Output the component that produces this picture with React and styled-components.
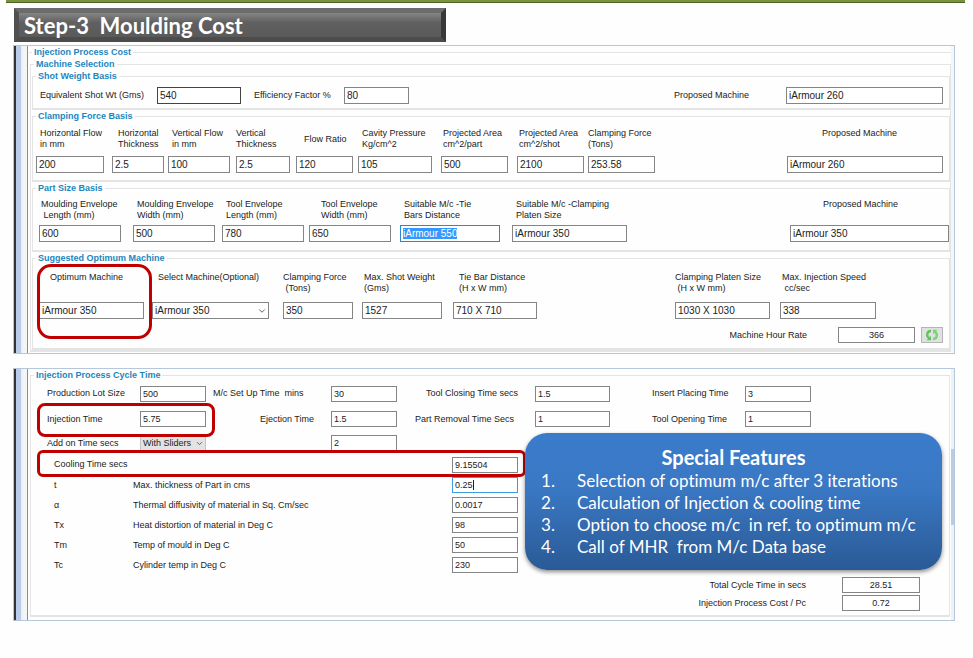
import React, {useEffect, useRef} from 'react';
import styled, {createGlobalStyle} from 'styled-components';
import {ChevronDown} from 'lucide-react';

const GlobalStyle = createGlobalStyle`
    * { box-sizing: border-box; }
    body {
        margin: 0;
        background: #fefefe;
        color: #222;
        font-family: "Liberation Sans", Arial, sans-serif;
        font-size: 9px;
        line-height: 11px;
    }
`

const Page = styled.main`
    padding: 0 18px 36px 13px;
`

const Top_Rule = styled.div`
    height: 3px;
    margin: 0 -10px 5px -7px;
    background: #77933c;
    border-bottom: 1px solid #4f6228;
`

const Title = styled.h1`
    width: 432px;
    height: 34px;
    margin: 0 0 3px 1px;
    padding-left: 5px;
    border: 5px solid;
    border-color: #6c6c6c #383838 #4c4c4c #505050;
    background: linear-gradient(#858585, #606060 40%, #5a5a5a);
    color: #fff;
    font-family: Lato, sans-serif;
    font-size: 22px;
    font-weight: 700;
    line-height: 26px;
    white-space: pre;
`

const Panel = styled.section`
    position: relative;
    display: flex;
    margin-bottom: 14px;
    border: 1px solid #b4c7dc;
    background: #fefefe;
`

const Window_Edge = styled.div`
    flex: 0 0 14px;
    border-right: 1px solid #8c8c8c;
    background: linear-gradient(to right, #333 2px, #b9cdea 2px, #b9cdea 7px, #e9eef6 7px, #f5f5f5 10px);
`

const Scroll_Edge = styled.div`
    flex: 0 0 3px;
    background: ${props => props.$thumb
        ? 'linear-gradient(#f1f1f1 80px, #bccbe0 80px, #bccbe0 156px, #f1f1f1 156px)'
        : '#f6f6f8'};
`

const Panel_Body = styled.div`
    flex: 1;
    min-width: 0;
    padding: 0 ${props => props.$side}px ${props => props.$bottom}px;
`

const Group = styled.fieldset`
    min-width: 0;
    margin: 0 0 0 1px;
    padding: 0;
    border: 1px solid #e4e4e4;
    border-width: ${props => props.$open ? '1px 0 0' : '1px 1px 2px'};
`

const Legend = styled.legend`
    height: 12px;
    margin-left: 3px;
    padding: 0 2px;
    color: #1c86c0;
    font-weight: 700;
    line-height: 12px;
`

const Row = styled.div`
    display: grid;
    grid-template-columns: ${props => props.$columns};
    align-items: ${props => props.$align || 'start'};
    padding: ${props => props.$pad};
`

const Label = styled.label`
    display: block;
    padding-left: ${props => props.$indent || 0}px;
    white-space: pre;
`

const Field_Label = styled(Label)`
    height: 22px;
    margin-bottom: ${props => props.$gap}px;
    line-height: ${props => props.$middle ? 22 : 11}px;
`

const Input = styled.input`
    display: block;
    width: ${props => props.$width ? props.$width + 'px' : '100%'};
    height: ${props => props.$small ? 16 : 17}px;
    padding: 0 2px;
    border: 1px solid ${props => props.$color || '#858585'};
    border-radius: 0;
    outline: none;
    background: #fff;
    color: #222;
    font-family: inherit;
    font-size: ${props => props.$small ? 9 : 10}px;
    text-align: ${props => props.$center ? 'center' : 'left'};

    &::selection {
        background: #3399ff;
        color: #fff;
    }
`

const Select_Box = styled.div`
    position: relative;
    width: ${props => props.$width}px;

    svg {
        position: absolute;
        right: 2px;
        top: 4px;
        pointer-events: none;
    }
`

const Select = styled.select`
    display: block;
    width: 100%;
    height: ${props => props.$small ? 16 : 17}px;
    padding: 0 2px;
    border: 1px solid ${props => props.$small ? '#c4c4c4' : '#858585'};
    border-radius: 0;
    appearance: none;
    background: ${props => props.$small ? '#e3e3e3' : '#fff'};
    color: #222;
    font-family: inherit;
    font-size: ${props => props.$small ? 9 : 10}px;
`

/* red marker drawn over the fields it surrounds */
const Marker = styled.span`
    position: absolute;
    top: ${props => props.$top}px;
    left: ${props => props.$left}px;
    width: ${props => props.$width}px;
    height: ${props => props.$height}px;
    border: 3px solid #c00000;
    border-radius: ${props => props.$radius}px;
    pointer-events: none;
    z-index: 1;
`

const Marked = styled.div`
    position: relative;
`

const Rate_Row = styled.div`
    display: flex;
    align-items: center;
    justify-content: flex-end;
    padding: 8px 6px 5px 0;
`

const Rate_Label = styled.label`
    margin-right: 31px;
`

const Refresh_Button = styled.button`
    display: flex;
    align-items: center;
    justify-content: center;
    width: 22px;
    height: 16px;
    margin-left: 6px;
    padding: 0;
    border: 1px solid #b5b5b5;
    background: #e1e1e1;
`

const Cycle_Grid = styled.div`
    display: grid;
    grid-template-columns: 93px 73px 118px 84px 120px 117px 93px 66px;
    grid-template-rows: 25px 26px 22px;
    align-items: center;
    padding: 0 0 0 16px;
`

const Cooling_Row = styled.div`
    position: relative;
    display: grid;
    grid-template-columns: 79px 319px 66px;
    align-items: center;
    width: 464px;
    height: ${props => props.$tall ? 21 : 20}px;
    margin-left: 23px;
`

const Wide_Label = styled(Label)`
    grid-column: span 2;
`

/* text cursor of the value being typed */
const Typing = styled.div`
    position: relative;

    &::after {
        content: '';
        position: absolute;
        left: 21px;
        top: 3px;
        width: 1px;
        height: 10px;
        background: #222;
    }
`

const Totals = styled.div`
    display: grid;
    grid-template-columns: auto 78px;
    grid-auto-rows: 18px;
    align-items: center;
    justify-content: end;
    column-gap: 36px;
    padding: 1px 29px 3px 0;
    text-align: right;
`

const Callout = styled.aside`
    position: absolute;
    top: 64px;
    right: 12px;
    width: 417px;
    padding: 12px 16px;
    border-radius: 22px;
    background: linear-gradient(#3a7ccb, #3a78c4 40%, #2a5a96);
    box-shadow: 0 2px 4px rgba(0, 0, 0, 0.45);
    color: #fff;
    font-family: Lato, sans-serif;
    font-size: 17px;
    font-variant-ligatures: none;
    line-height: 22px;
    z-index: 2;
`

const Callout_Title = styled.h2`
    margin: 0;
    font-size: 20px;
    font-weight: 700;
    line-height: 25px;
    text-align: center;
`

const Callout_List = styled.ol`
    margin: 0;
    padding: 0;
    list-style: none;
    counter-reset: feature;

    li {
        display: flex;
        counter-increment: feature;
        white-space: pre;
    }

    li::before {
        content: counter(feature) '.';
        flex: 0 0 36px;
    }
`

const RefreshIcon = () => (
    <svg width="14" height="12" viewBox="0 0 14 12" aria-hidden="true">
        <path d="M6 2C3.500 2 2.200 3.800 2.200 6c0 1.500.7 2.600 1.800 3.300" fill="none" stroke="#5fc45a" strokeWidth="2.400"/>
        <path d="M1.500 11.200H6V6.800z" fill="#5fc45a"/>
        <path d="M8 10c2.500 0 3.800-1.800 3.800-4 0-1.500-.7-2.600-1.800-3.300" fill="none" stroke="#7dd177" strokeWidth="2.400"/>
        <path d="M12.500.8H8v4.400z" fill="#7dd177"/>
    </svg>
);

const clamping = [
    {id: 'hflow', label: 'Horizontal Flow\nin mm', value: '200', width: 68, indent: 4},
    {id: 'hthick', label: 'Horizontal\nThickness', value: '2.5', width: 52, indent: 6},
    {id: 'vflow', label: 'Vertical Flow\nin mm', value: '100', width: 62, indent: 4},
    {id: 'vthick', label: 'Vertical\nThickness', value: '2.5', width: 54},
    {id: 'ratio', label: 'Flow Ratio', value: '120', width: 57, indent: 8, middle: true},
    {id: 'cavity', label: 'Cavity Pressure\nKg/cm^2', value: '105', width: 74, indent: 4},
    {id: 'areapart', label: 'Projected Area\ncm^2/part', value: '500', width: 67, indent: 2},
    {id: 'areashot', label: 'Projected Area\ncm^2/shot', value: '2100', width: 67, indent: 2},
    {id: 'force', label: 'Clamping Force\n(Tons)', value: '253.58', width: 67},
    {id: 'clampmachine', label: 'Proposed Machine', value: 'iArmour 260', width: 156, indent: 35},
];

const partSize = [
    {id: 'mlength', label: 'Moulding Envelope\n Length (mm)', value: '600', width: 82, indent: 2},
    {id: 'mwidth', label: 'Moulding Envelope\nWidth (mm)', value: '500', width: 82, indent: 4},
    {id: 'tlength', label: 'Tool Envelope\nLength (mm)', value: '780', width: 82, indent: 4},
    {id: 'twidth', label: 'Tool Envelope\nWidth (mm)', value: '650', width: 82, indent: 12},
    {id: 'tiebar', label: 'Suitable M/c -Tie\nBars Distance', value: 'iArmour 550', width: 100, indent: 4, selected: true},
    {id: 'platen', label: 'Suitable M/c -Clamping\nPlaten Size', value: 'iArmour 350', width: 115, indent: 4},
    {id: 'partmachine', label: 'Proposed Machine', value: 'iArmour 350', width: 159, indent: 33},
];

const optimum = [
    {id: 'optforce', label: 'Clamping Force\n (Tons)', value: '350', width: 70},
    {id: 'shotweight', label: 'Max. Shot Weight\n(Gms)', value: '1527', width: 80, indent: 2},
    {id: 'optbar', label: 'Tie Bar Distance\n(H x W mm)', value: '710 X 710', width: 84, indent: 6},
    {id: 'optplaten', label: 'Clamping Platen Size\n (H x W mm)', value: '1030 X 1030', width: 95},
    {id: 'speed', label: 'Max. Injection Speed\n cc/sec', value: '338', width: 96, indent: 2},
];

const cooling = [
    {id: 'ct', symbol: 't', label: 'Max. thickness of Part in cms', value: '0.25', typing: true},
    {id: 'ca', symbol: 'α', label: 'Thermal diffusivity of material in Sq. Cm/sec', value: '0.0017'},
    {id: 'ctx', symbol: 'Tx', label: 'Heat distortion of material in Deg C', value: '98'},
    {id: 'ctm', symbol: 'Tm', label: 'Temp of mould in Deg C', value: '50'},
    {id: 'ctc', symbol: 'Tc', label: 'Cylinder temp in Deg C', value: '230'},
];

const Field = ({field, gap}) => {
    const input = useRef(null);

    useEffect(() => {
        if (field.selected) {
            input.current.focus();
            input.current.select();
        }
    }, [field.selected]);

    return(
    <div>
        <Field_Label htmlFor={field.id} $indent={field.indent} $middle={field.middle} $gap={gap}>{field.label}</Field_Label>
        <Input ref={input} id={field.id} defaultValue={field.value} $width={field.width} $color={field.selected && '#2a86d8'}/>
    </div>
    );
}

const MachineSelection = () => (
    <Panel>
        <Window_Edge/>
        <Panel_Body $side={0} $bottom={1}>
            <Group $open>
                <Legend>Injection Process Cost</Legend>
                <Group>
                    <Legend>Machine Selection</Legend>
                    <Group>
                        <Legend>Shot Weight Basis</Legend>
                        <Row $columns="117px 97px 90px 65px 1fr 112px 157px" $pad="5px 6px 4px 7px" $align="center">
                            <Label htmlFor="shotwt">Equivalent Shot Wt (Gms)</Label>
                            <Input id="shotwt" defaultValue="540" $width={84} $color="#444"/>
                            <Label htmlFor="efficiency">Efficiency Factor %</Label>
                            <Input id="efficiency" defaultValue="80"/>
                            <span/>
                            <Label htmlFor="shotmachine">Proposed Machine</Label>
                            <Input id="shotmachine" defaultValue="iArmour 260"/>
                        </Row>
                    </Group>
                    <Group>
                        <Legend>Clamping Force Basis</Legend>
                        <Row $columns="76px 56px 68px 60px 62px 83px 76px 71px 1fr 156px" $pad="6px 6px 7px 3px">
                            {clamping.map(field => <Field key={field.id} field={field} gap={6}/>)}
                        </Row>
                    </Group>
                    <Group>
                        <Legend>Part Size Basis</Legend>
                        <Row $columns="94px 89px 87px 91px 112px 1fr 159px" $pad="5px 0 8px 6px">
                            {partSize.map(field => <Field key={field.id} field={field} gap={4}/>)}
                        </Row>
                    </Group>
                    <Group>
                        <Legend>Suggested Optimum Machine</Legend>
                        <Row $columns="113px 131px 79px 91px 1fr 105px 163px" $pad="8px 6px 0 6px">
                            <Marked>
                                <Field_Label htmlFor="optmachine" $indent={11} $gap={8}>Optimum Machine</Field_Label>
                                <Input id="optmachine" defaultValue="iArmour 350" $width={105}/>
                                <Marker $top={-8} $left={-2} $width={115} $height={75} $radius={14}/>
                            </Marked>
                            <div>
                                <Field_Label htmlFor="selmachine" $indent={6} $gap={8}>Select Machine(Optional)</Field_Label>
                                <Select_Box $width={117}>
                                    <Select id="selmachine"><option>iArmour 350</option></Select>
                                    <ChevronDown size={10} color="#444" strokeWidth={2}/>
                                </Select_Box>
                            </div>
                            {optimum.map(field => <Field key={field.id} field={field} gap={8}/>)}
                        </Row>
                        <Rate_Row>
                            <Rate_Label htmlFor="hourrate">Machine Hour Rate</Rate_Label>
                            <Input id="hourrate" defaultValue="366" $width={77} $small $center/>
                            <Refresh_Button type="button" aria-label="Refresh rate"><RefreshIcon/></Refresh_Button>
                        </Rate_Row>
                    </Group>
                </Group>
            </Group>
        </Panel_Body>
        <Scroll_Edge/>
    </Panel>
);

const CycleTime = () => (
    <Panel>
        <Window_Edge/>
        <Panel_Body $side={1} $bottom={3}>
            <Group>
                <Legend>Injection Process Cycle Time</Legend>
                <Cycle_Grid>
                    <Label htmlFor="lot">Production Lot Size</Label>
                    <Input id="lot" defaultValue="500" $small $width={66}/>
                    <Label htmlFor="setup">M/c Set Up Time  mins</Label>
                    <Input id="setup" defaultValue="30" $small $width={66}/>
                    <Label htmlFor="closing" $indent={11}>Tool Closing Time secs</Label>
                    <Input id="closing" defaultValue="1.5" $small $width={75}/>
                    <Label htmlFor="insert">Insert Placing Time</Label>
                    <Input id="insert" defaultValue="3" $small/>

                    <Marked>
                        <Label htmlFor="injection">Injection Time</Label>
                        <Marker $top={-11} $left={-10} $width={178} $height={34} $radius={8}/>
                    </Marked>
                    <Input id="injection" defaultValue="5.75" $small $width={66}/>
                    <Label htmlFor="ejection" $indent={47}>Ejection Time</Label>
                    <Input id="ejection" defaultValue="1.5" $small $width={66}/>
                    <Label htmlFor="removal">Part Removal Time Secs</Label>
                    <Input id="removal" defaultValue="1" $small $width={75}/>
                    <Label htmlFor="opening">Tool Opening Time</Label>
                    <Input id="opening" defaultValue="1" $small/>

                    <Label htmlFor="addon">Add on Time secs</Label>
                    <Select_Box $width={66}>
                        <Select id="addon" $small><option>With Sliders</option></Select>
                        <ChevronDown size={9} color="#444" strokeWidth={2}/>
                    </Select_Box>
                    <span/>
                    <Input aria-label="Add on time value" defaultValue="2" $small $width={66}/>
                </Cycle_Grid>
                <Cooling_Row $tall>
                    <Wide_Label htmlFor="coolingtime">Cooling Time secs</Wide_Label>
                    <Input id="coolingtime" defaultValue="9.15504" $small/>
                    <Marker $top={-4} $left={-17} $width={489} $height={27} $radius={6}/>
                </Cooling_Row>
                {cooling.map(item => (
                    <Cooling_Row key={item.id}>
                        <span>{item.symbol}</span>
                        <Label htmlFor={item.id}>{item.label}</Label>
                        {item.typing ?
                            <Typing><Input id={item.id} defaultValue={item.value} $small $color="#3d9be0"/></Typing> :
                            <Input id={item.id} defaultValue={item.value} $small/>}
                    </Cooling_Row>
                ))}
                <Totals>
                    <label htmlFor="totalcycle">Total Cycle Time in secs</label>
                    <Input id="totalcycle" defaultValue="28.51" $small $center/>
                    <label htmlFor="costpc">Injection Process Cost / Pc</label>
                    <Input id="costpc" defaultValue="0.72" $small $center/>
                </Totals>
            </Group>
        </Panel_Body>
        <Scroll_Edge $thumb/>
        <Callout>
            <Callout_Title>Special Features</Callout_Title>
            <Callout_List>
                <li>Selection of optimum m/c after 3 iterations</li>
                <li>Calculation of Injection &amp; cooling time</li>
                <li>Option to choose m/c  in ref. to optimum m/c</li>
                <li>Call of MHR  from M/c Data base</li>
            </Callout_List>
        </Callout>
    </Panel>
);

const App = () => {
    return(
    <Page>
        <GlobalStyle/>
        <Top_Rule/>
        <Title>Step-3  Moulding Cost</Title>
        <MachineSelection/>
        <CycleTime/>
    </Page>
    );
}

export default App;
